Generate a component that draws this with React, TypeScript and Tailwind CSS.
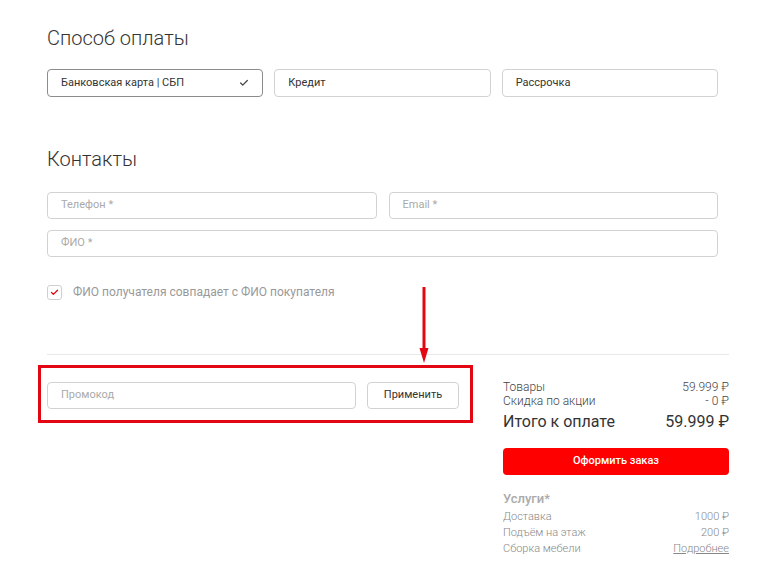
import { Check } from "lucide-react";

function PayOption({ label, active }: { label: string; active?: boolean }) {
  return (
    <div
      className={
        "h-[28px] rounded-[4px] border bg-white flex items-center justify-between pl-[13px] pr-[13px] text-[11px] text-[#333] " +
        (active ? "border-[#8c8c8c]" : "border-[#d2d2d2]")
      }
    >
      <span>{label}</span>
      {active && <Check className="size-[10px] text-[#444]" strokeWidth={3} />}
    </div>
  );
}

function Field({ placeholder, className }: { placeholder: string; className?: string }) {
  return (
    <div
      className={
        "h-[27px] rounded-[4px] border border-[#d2d2d2] bg-white flex items-center pl-[13px] text-[11px] text-[#aaa] " +
        (className ?? "")
      }
    >
      {placeholder}
    </div>
  );
}

export default function App() {
  return (
    <div className="relative w-[774px] h-[581px] bg-white pl-[47px] font-['Roboto',sans-serif] overflow-hidden">
      <div className="w-[682px]">
        {/* Способ оплаты */}
        <h2 className="pt-[26px] text-[20px] leading-[24px] font-light text-[#333]">Способ оплаты</h2>
        <div className="mt-[19px] w-[671px] grid grid-cols-3 gap-[11px]">
          <PayOption label="Банковская карта | СБП" active />
          <PayOption label="Кредит" />
          <PayOption label="Рассрочка" />
        </div>

        {/* Контакты */}
        <h2 className="mt-[50px] text-[20px] leading-[24px] font-light text-[#333]">Контакты</h2>
        <div className="mt-[21px] w-[671px] flex flex-col gap-[11px]">
          <div className="grid grid-cols-2 gap-[12px]">
            <Field placeholder="Телефон *" />
            <Field placeholder="Email *" />
          </div>
          <Field placeholder="ФИО *" />
        </div>

        <div className="mt-[28px] h-[15px] flex items-center gap-[11px]">
          <div className="size-[15px] rounded-[3px] border border-[#cfcfcf] flex items-center justify-center">
            <Check className="size-[9px] text-[#e30613]" strokeWidth={3.5} />
          </div>
          <span className="text-[12px] leading-[15px] text-[#999]">ФИО получателя совпадает с ФИО покупателя</span>
        </div>

        <div className="mt-[54px] h-px bg-[#e8e8e8]" />

        <div className="flex">
          {/* промокод */}
          <div className="-ml-[9px] mt-[10px] w-[435px] h-[58px] border-[3px] border-[#e30613] pl-[6px] pt-[14px] flex gap-[11px] self-start">
            <Field placeholder="Промокод" className="w-[309px]" />
            <div className="w-[92px] h-[27px] rounded-[4px] border border-[#d2d2d2] flex items-center justify-center text-[11px] text-[#333]">
              Применить
            </div>
          </div>

          {/* итого */}
          <div className="ml-[30px] w-[226px] pt-[25px]">
            <div className="flex justify-between text-[12px] leading-[14px] font-light text-[#444]">
              <span>Товары</span>
              <span>59.999 ₽</span>
            </div>
            <div className="flex justify-between text-[12px] leading-[14px] font-light text-[#444]">
              <span>Скидка по акции</span>
              <span>- 0 ₽</span>
            </div>
            <div className="mt-[4px] flex justify-between text-[16px] leading-[20px] text-[#333]">
              <span>Итого к оплате</span>
              <span>59.999 ₽</span>
            </div>
            <div className="mt-[16px] h-[27px] rounded-[4px] bg-[#ff0000] flex items-center justify-center text-[11px] font-medium text-white">
              Оформить заказ
            </div>
            <div className="mt-[16px] text-[13px] leading-[16px] font-medium text-[#aaa]">Услуги*</div>
            <div className="mt-[2px] text-[11px] leading-[16px] font-light text-[#888]">
              <div className="flex justify-between">
                <span>Доставка</span>
                <span>1000 ₽</span>
              </div>
              <div className="flex justify-between">
                <span>Подъём на этаж</span>
                <span>200 ₽</span>
              </div>
              <div className="flex justify-between">
                <span>Сборка мебели</span>
                <span className="underline">Подробнее</span>
              </div>
            </div>
          </div>
        </div>
      </div>

      {/* стрелка */}
      <svg className="absolute left-[419px] top-[287px]" width="10" height="76" viewBox="0 0 10 76">
        <rect x="3.5" y="0" width="3" height="64" fill="#e30613" />
        <polygon points="0.5,61 9.5,61 5,76" fill="#e30613" />
      </svg>
    </div>
  );
}
